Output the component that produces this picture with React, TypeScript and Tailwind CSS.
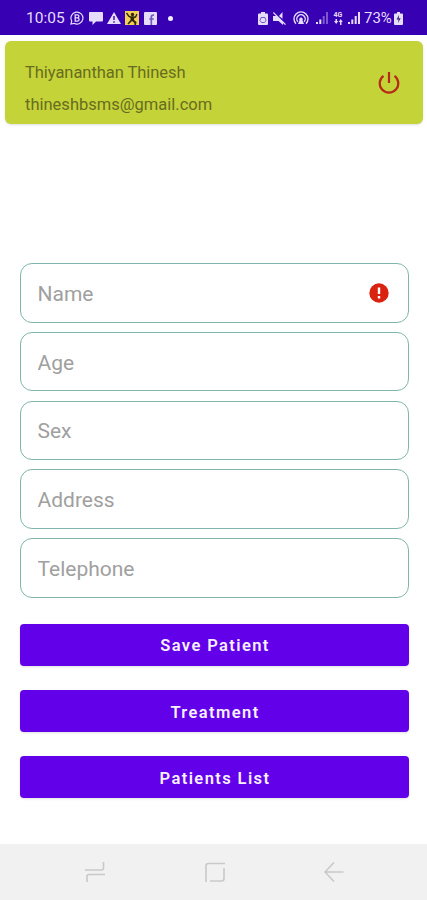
import { useState } from "react";

const FIELDS = ["Name", "Age", "Sex", "Address", "Telephone"];
const ACTIONS = ["Save Patient", "Treatment", "Patients List"];

function StatusBar() {
  return (
    <header className="flex h-[35px] shrink-0 items-center bg-[#3700b3] pl-[26px] pr-6 pt-px text-[#e6ddfb]">
      <span className="w-11 whitespace-nowrap pt-0.5 text-[15.5px] leading-none">10:05</span>
      <svg className="h-[14px] w-[14px] shrink-0" viewBox="0 0 14 14" fill="none" stroke="currentColor">
        <path d="M1 13l.7-3A6 6 0 1 1 4 12.3z" strokeWidth="1.2" />
        <path d="M5.2 3.8h2.2a1.5 1.5 0 0 1 0 3 1.7 1.7 0 0 1 0 3.4H5.2zM5.2 6.8h2.2" strokeWidth="1.3" />
      </svg>
      <svg className="ml-[5px] h-[13px] w-[14px] shrink-0" viewBox="0 0 14 13" fill="currentColor">
        <path d="M1 0h12a1 1 0 0 1 1 1v7.500a1 1 0 0 1-1 1H7L3.500 13V9.500H1a1 1 0 0 1-1-1V1a1 1 0 0 1 1-1z" />
      </svg>
      <svg className="ml-1 h-3 w-[14px] shrink-0" viewBox="0 0 14 12">
        <path d="M7 0l7 12H0z" fill="currentColor" />
        <path d="M7 4v4M7 9.200v1.500" stroke="#3700b3" strokeWidth="1.400" />
      </svg>
      <svg className="ml-1 h-[14px] w-[14px] shrink-0" viewBox="0 0 14 14">
        <path d="M0 0h14v14H0z" fill="#f3cf54" />
        <circle cx="7.500" cy="3.500" r="1.700" fill="#30290f" />
        <path d="M1.500 2l2.500 3.500 3 1 3.500-.5 1.500-3" fill="none" stroke="#30290f" strokeWidth="1.400" />
        <path d="M5.500 5.500h4L9 9l2.500 2-.5 3H9.500l-.3-2.300L7 10l-3.500 3.500-1-1L5.500 9z" fill="#30290f" />
      </svg>
      <svg className="ml-[5px] h-[13px] w-[13px] shrink-0" viewBox="0 0 13 13">
        <rect width="13" height="13" rx="1" fill="currentColor" />
        <path d="M7.300 13V4.800q0-1.900 2.700-1.600M5.300 7h4.500" fill="none" stroke="#7557bd" strokeWidth="1.700" />
      </svg>
      <span className="ml-[11px] h-[5px] w-[5px] shrink-0 rounded-full bg-[#f3eeff]" />

      <div className="ml-auto flex items-center">
        <svg className="h-[13px] w-[10px]" viewBox="0 0 10 13">
          <path d="M3 0h4v1.500h2q1 0 1 1V12q0 1-1 1H1q-1 0-1-1V2.500q0-1 1-1h2z" fill="currentColor" />
          <path d="M3 5.500h4l1 3-1.500 2h-3L2 8.500z" fill="none" stroke="#7459c4" />
        </svg>
        <svg className="ml-[5px] h-[13px] w-[13px]" viewBox="0 0 13 13" fill="currentColor">
          <path d="M0 4h3l7 6v3L5.500 9H0zM6 4l3.500-4v6.700zM.7 0L13 12.300l-1 .7L0 1z" />
        </svg>
        <svg className="ml-[7px] h-[14px] w-4" viewBox="0 0 16 14" fill="none" stroke="currentColor" strokeWidth="1.400">
          <path d="M3 12.800a7 7 0 1 1 10 0M5 10.800a4.200 4.200 0 1 1 6 0" />
          <path d="M8 6.500a2 2 0 0 1 1.500 3l1.500 3.500H5l1.500-3.500a2 2 0 0 1 1.500-3z" fill="currentColor" stroke="none" />
        </svg>
        <svg className="ml-[7px] h-3 w-3" viewBox="0 0 12 12" fill="currentColor">
          <path d="M0 10h2v2H0zM3.300 7.500h2V12h-2z" />
          <path opacity=".4" d="M6.700 4h2v8h-2zM10 0h2v12h-2z" />
        </svg>
        <span className="ml-[5px] flex w-[10px] flex-col items-center text-[7px] font-bold leading-[7px]">
          4G
          <svg className="h-[6px] w-[9px]" viewBox="0 0 9 6" fill="currentColor">
            <path d="M0 2h1.500V0h1.500v2h1.300L2.200 5zM4.700 3l2-3 2 3H7.500v3H6V3z" />
          </svg>
        </span>
        <svg className="ml-[5px] h-3 w-3" viewBox="0 0 12 12" fill="currentColor">
          <path d="M0 10h2v2H0zM3.300 7.500h2V12h-2zM6.700 4h2v8h-2zM10 0h2v12h-2z" />
        </svg>
        <span className="ml-[4px] w-[30px] whitespace-nowrap pt-px text-[15px] leading-none">73%</span>
        <svg className="h-[13px] w-[9px]" viewBox="0 0 9 13">
          <path d="M3 0h3v1.500h2q1 0 1 1V12q0 1-1 1H1q-1 0-1-1V2.500q0-1 1-1h2z" fill="currentColor" />
          <path d="M5 3L2.500 7.500h2L4 11l2.700-4.700H4.800z" fill="#3b2875" />
        </svg>
      </div>
    </header>
  );
}

function ProfileCard() {
  return (
    <section className="mx-1 ml-[5px] mt-[6px] flex h-[83px] shrink-0 items-center justify-between rounded-md bg-[#c3d338] pl-5 pr-[23px] text-[#696c20] shadow-sm">
      <div className="pt-3 text-[16.5px] leading-8">
        <p className="tracking-[-0.05px]">Thiyananthan Thinesh</p>
        <p>thineshbsms@gmail.com</p>
      </div>
      <button aria-label="Sign out">
        <svg className="h-[22px] w-[22px]" viewBox="0 0 22 22" fill="none" stroke="#b52b17" strokeWidth="2.200">
          <path d="M11 0v11M5.500 3.800a9.300 9.300 0 1 0 11 0" />
        </svg>
      </button>
    </section>
  );
}

function NavBar() {
  return (
    <nav className="mt-auto flex h-14 shrink-0 items-center justify-between bg-[#f1f1f1] pl-[85px] pr-[83px] text-[#c9c9c9]">
      <svg className="h-5 w-5" viewBox="0 0 20 20" fill="none" stroke="currentColor" strokeWidth="1.600">
        <path d="M0 8h16.500q2 0 2-2V0M20 12.500H4q-2 0-2 2V20" />
      </svg>
      <svg className="h-5 w-5" viewBox="0 0 20 20" fill="none" stroke="currentColor" strokeWidth="1.600">
        <path d="M1 20V4q0-2.500 2.500-2.500H20M19 6v10.500q0 2.500-2.500 2.500H5" />
      </svg>
      <svg className="h-5 w-5" viewBox="0 0 20 20" fill="none" stroke="currentColor" strokeWidth="1.600">
        <path d="M10 .5L1 10l9 9.500M1 10h18.500" />
      </svg>
    </nav>
  );
}

export default function App() {
  const [patient, setPatient] = useState<Record<string, string>>({});

  return (
    <div className="flex h-[900px] w-full flex-col bg-white font-['Roboto',sans-serif]">
      <StatusBar />
      <ProfileCard />

      <main className="pl-[19.500px] pr-[18.500px] pt-[139px]">
        <div className="flex flex-col gap-[9.250px]">
          {FIELDS.map((field) => (
            <div
              key={field}
              className="flex h-[59.500px] items-center rounded-xl border-[1.500px] border-[#80b5ab] pl-[17px] pr-[19px]"
            >
              <input
                type="text"
                placeholder={field}
                value={patient[field] ?? ""}
                onChange={(e) => setPatient({ ...patient, [field]: e.target.value })}
                className="min-w-0 flex-1 pt-0.5 text-[21px] leading-7 text-gray-700 outline-none placeholder:text-[#a0a0a0]"
              />
              {field === "Name" && (
                <svg className="h-5 w-5" viewBox="0 0 20 20">
                  <circle cx="10" cy="10" r="9.700" fill="#d92310" />
                  <path d="M10 4.500v6.500M10 13v2.500" stroke="#fff" strokeWidth="2.400" />
                </svg>
              )}
            </div>
          ))}
        </div>

        <div className="mt-[26px] flex flex-col gap-6">
          {ACTIONS.map((label) => (
            <button
              key={label}
              className="h-[42.300px] rounded bg-[#6200ea] pl-0.5 pt-1 text-[16.500px] font-semibold tracking-[1.400px] text-[#f7f1ff] shadow-sm"
            >
              {label}
            </button>
          ))}
        </div>
      </main>

      <NavBar />
    </div>
  );
}
